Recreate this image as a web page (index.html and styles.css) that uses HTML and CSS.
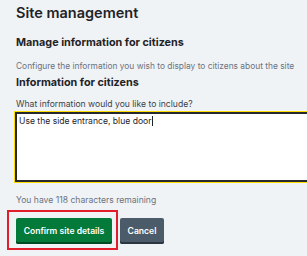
FILE: index.html
```html
<!DOCTYPE html>
<html>
<head>
<meta charset="utf-8">
<link rel="stylesheet" href="styles.css">
</head>
<body>
<main class="page">
  <h1 class="title">Site management</h1>
  <h2 class="section">Manage information for citizens</h2>
  <p class="hint">Configure the information you wish to display to citizens about the site</p>
  <h3 class="field-title">Information for citizens</h3>
  <label class="label" for="info">What information would you like to include?</label>
  <div class="textarea-wrap">
    <div class="textarea" id="info">Use the side entrance, blue door<span class="caret"></span></div>
  </div>
  <p class="count">You have 118 characters remaining</p>
  <div class="actions">
    <div class="highlight">
      <button class="btn btn-primary">Confirm site details</button>
    </div>
    <button class="btn btn-secondary">Cancel</button>
  </div>
</main>
</body>
</html>
```
FILE: styles.css
```css
html, body {
  margin: 0;
  padding: 0;
  background: #f0f3f5;
}
body {
  font-family: Inter, "Liberation Sans", sans-serif;
  color: #1f2328;
  width: 307px;
  height: 256px;
  overflow: hidden;
}
.page {
  padding: 3px 0 0 16px;
}
.title {
  margin: 0;
  font-size: 14.5px;
  font-weight: 600;
  line-height: 20px;
  color: #1f2328;
}
.section {
  margin: 13px 0 0;
  font-size: 10.8px;
  font-weight: 700;
  line-height: 14px;
}
.hint {
  margin: 10px 0 0;
  font-size: 8.4px;
  line-height: 12px;
  color: #6b7280;
  white-space: nowrap;
}
.field-title {
  margin: 4px 0 0;
  font-size: 10.8px;
  font-weight: 700;
  line-height: 14px;
}
.label {
  display: block;
  margin-top: 8px;
  font-size: 8.6px;
  line-height: 12px;
  color: #3b4148;
}
.textarea-wrap {
  margin: 1px 0 0 -2px;
  width: 300px;
  border: 1px solid #ffdd00;
  box-sizing: border-box;
}
.textarea {
  height: 64px;
  border: 2px solid #25292e;
  background: #fff;
  font-size: 8.6px;
  line-height: 12px;
  padding: 1px 2px;
  color: #1f2328;
}
.caret {
  display: inline-block;
  width: 1px;
  height: 10px;
  background: #1f2328;
  vertical-align: -2px;
}
.count {
  margin: 11px 0 0;
  font-size: 8.6px;
  line-height: 12px;
  color: #6b7280;
}
.actions {
  display: flex;
  align-items: flex-start;
  gap: 2px;
  margin-top: 4px;
  margin-left: -9px;
}
.highlight {
  border: 2px solid #e31e2c;
  padding: 6px 4px 4px 7px;
}
.btn {
  display: block;
  border: 0;
  border-radius: 2px;
  font-family: Inter, "Liberation Sans", sans-serif;
  font-weight: 600;
  font-size: 8.6px;
  color: #fff;
  height: 26px;
  white-space: nowrap;
}
.btn-primary {
  background: #047a3a;
  width: 96px;
  padding: 0;
  box-shadow: inset 0 -2px 0 #024a24;
}
.btn-secondary {
  margin-top: 8px;
  background: #4b5b6a;
  width: 44px;
  padding: 0;
  box-shadow: inset 0 -2px 0 #2c3641;
}
```
